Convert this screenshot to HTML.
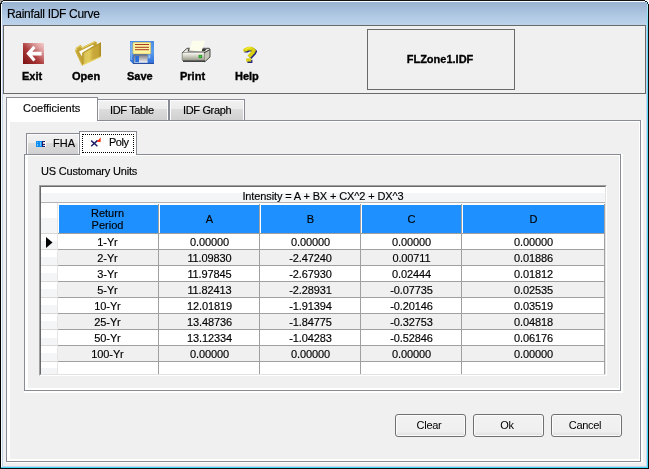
<!DOCTYPE html>
<html><head><meta charset="utf-8"><title>Rainfall IDF Curve</title>
<style>
html,body{margin:0;padding:0;}
body{width:649px;height:469px;overflow:hidden;background:#f0f0f0;font-family:"Liberation Sans",sans-serif;font-size:11px;color:#000;position:relative;}
.a{position:absolute;}
.t{position:absolute;white-space:nowrap;line-height:13px;}
#win{left:0;top:0;width:649px;height:469px;background:#f0f0f0;will-change:transform;}
#title{left:0;top:0;width:649px;height:26px;background:linear-gradient(#98b4d2 0,#9db7d5 20%,#b4cce6 70%,#bdd4ec 100%);}
#title .t{left:7px;top:7px;font-size:12px;line-height:14px;letter-spacing:-0.3px;}
.t{-webkit-text-stroke:0.15px #000;}
.t.tblbl{font-weight:bold;font-size:11px;-webkit-text-stroke:0.35px #000;}
.tab{box-sizing:border-box;border:1px solid #898c95;border-bottom:none;background:linear-gradient(#f2f2f2 0,#ebebeb 44%,#dddddd 44%,#d0d0d0 100%);box-shadow:inset 1px 1px 0 #fcfcfc,inset -1px 0 0 #fcfcfc;}
.btn{box-sizing:border-box;border:1px solid #707070;border-radius:3px;background:linear-gradient(#f2f2f2 0,#efefef 80%,#dcdcdc 100%);box-shadow:inset 0 0 0 1px #fcfcfc;text-align:center;line-height:21px;height:23px;width:71px;top:414px;text-indent:-3px;letter-spacing:-0.3px;}
table{border-collapse:collapse;}
.cell{position:absolute;text-align:center;line-height:15px;height:15px;}
</style></head><body>
<div class="a" id="win">
 <div class="a" id="title"><div class="t">Rainfall IDF Curve</div></div>
 <!-- window frame -->
 <div class="a" style="left:0;top:0;width:1px;height:469px;background:#000"></div>
 <div class="a" style="left:1px;top:1px;width:1px;height:467px;background:#fbfcfe"></div>
 <div class="a" style="left:2px;top:26px;width:1px;height:441px;background:#c3d5ea"></div>
 <div class="a" style="left:0;top:0;width:649px;height:1px;background:#111"></div>
 <div class="a" style="left:1px;top:1px;width:647px;height:1px;background:#fbfcfe"></div>
 <div class="a" style="left:648px;top:0;width:1px;height:469px;background:#0c0c0c"></div>
 <div class="a" style="left:647px;top:2px;width:1px;height:466px;background:linear-gradient(#b8eaf8 0,#5fdcf7 30px,#42d7f5 100%)"></div>
 <div class="a" style="left:646px;top:26px;width:1px;height:441px;background:#c9d3ee"></div>
 <div class="a" style="left:0;top:468px;width:649px;height:1px;background:#0c0c0c"></div>
 <div class="a" style="left:1px;top:467px;width:647px;height:1px;background:#42d7f5"></div>
 <div class="a" style="left:2px;top:466px;width:645px;height:1px;background:#c9d3ee"></div>
 <!-- rounded corners -->
 <div class="a" style="left:0;top:0;width:3px;height:1px;background:#a4a4a4"></div>
 <div class="a" style="left:0;top:1px;width:1px;height:2px;background:#a4a4a4"></div>
 <div class="a" style="left:1px;top:1px;width:2px;height:1px;background:#333"></div>
 <div class="a" style="left:1px;top:2px;width:1px;height:2px;background:#333"></div>
 <div class="a" style="left:2px;top:2px;width:1px;height:1px;background:#e8eef6"></div>
 <div class="a" style="left:645px;top:0;width:4px;height:1px;background:#fff"></div>
 <div class="a" style="left:648px;top:1px;width:1px;height:3px;background:#fff"></div>
 <div class="a" style="left:645px;top:1px;width:2px;height:1px;background:#1a2a30"></div>
 <div class="a" style="left:647px;top:1px;width:1px;height:1px;background:#fff"></div>
 <div class="a" style="left:647px;top:2px;width:1px;height:2px;background:#10303a"></div>
 <div class="a" style="left:646px;top:2px;width:1px;height:1px;background:#c8f0fa"></div>

 <!-- toolbar panel -->
 <div class="a" style="left:3px;top:25px;width:643px;height:69px;box-sizing:border-box;border:1px solid #696969;"></div>

 <!-- Exit icon -->
 <svg class="a" style="left:23px;top:43px" width="21" height="21" viewBox="0 0 21 21">
  <defs><linearGradient id="gex" x1="1" y1="0" x2="0" y2="1"><stop offset="0" stop-color="#f6d0d0"/><stop offset="0.25" stop-color="#dc9a9a"/><stop offset="0.55" stop-color="#ad3c3c"/><stop offset="1" stop-color="#7a1010"/></linearGradient></defs>
  <rect width="21" height="21" fill="url(#gex)"/>
  <path d="M3.3 10.6 L10.3 2.8 L12.6 5 L9.3 8.8 H18.6 V12.6 H9.3 L12.6 16.4 L10.3 18.4 Z" fill="#fff"/>
 </svg>
 <div class="t tblbl" style="left:22px;top:70px">Exit</div>

 <!-- Open icon -->
 <svg class="a" style="left:74px;top:40px" width="29" height="27" viewBox="0 0 29 27">
  <defs><linearGradient id="gop" x1="0" y1="0" x2="1" y2="0"><stop offset="0" stop-color="#b08c24"/><stop offset="0.12" stop-color="#dcc458"/><stop offset="0.35" stop-color="#e2cc5c"/><stop offset="0.6" stop-color="#c8a838"/><stop offset="0.85" stop-color="#c4a434"/><stop offset="1" stop-color="#a8861e"/></linearGradient></defs>
  <path d="M1.6 11.2 L2.4 7.8 L6.6 5.2 L8.4 7.6 L20.6 1.6 L22.6 2.4 L22.6 5 L9 13 L9 25 L8 25 Z" fill="#c4a434" stroke="#d2b848" stroke-width="0.9" stroke-linejoin="round"/>
  <path d="M2 10.6 L2.8 8 L6.4 5.8 L8 8.2 L20.6 2" fill="none" stroke="#e6d46a" stroke-width="1"/>
  <path d="M5 11.4 L18.8 4.8 L20 5.6 L8.6 12.6 L8 16.6 Z" fill="#fcfcf6"/>
  <path d="M8.5 13.2 L27 2.4 L27 17 L8.5 25.4 Z" fill="url(#gop)"/>
  <path d="M8.5 25 L27 16.6" stroke="#ecdc74" stroke-width="1" fill="none"/>
  <path d="M8.5 13.4 L27 2.6" stroke="#a88820" stroke-width="0.8" fill="none"/>
 </svg>
 <div class="t tblbl" style="left:72px;top:70px">Open</div>

 <!-- Save icon -->
 <svg class="a" style="left:130px;top:41px" width="24" height="23" viewBox="0 0 24 23">
  <defs><linearGradient id="gsv" x1="0" y1="0" x2="0" y2="1"><stop offset="0" stop-color="#4a8ce4"/><stop offset="0.5" stop-color="#5a9cec"/><stop offset="1" stop-color="#2a6cd8"/></linearGradient>
  <linearGradient id="gsh" x1="0" y1="0" x2="0" y2="1"><stop offset="0" stop-color="#7c7c80"/><stop offset="1" stop-color="#f4f4f6"/></linearGradient></defs>
  <path d="M0 0 H24 V23 H3.2 L0 19.8 Z" fill="url(#gsv)"/>
  <rect x="0.5" y="1" width="1.4" height="18" fill="#8ab8f4" opacity="0.8"/>
  <path d="M3 22.5 H24" stroke="#2c4c9c" stroke-width="1"/>
  <rect x="3" y="1.5" width="17.6" height="11.4" rx="0.8" fill="#fdf5a2" stroke="#e0cc68" stroke-width="0.8"/>
  <rect x="5" y="3" width="14" height="1" fill="#a83a20"/>
  <rect x="5" y="5.8" width="14" height="1" fill="#a83a20"/>
  <rect x="5" y="8.2" width="14" height="1" fill="#a83a20"/>
  <rect x="4" y="13.8" width="13.6" height="7.9" fill="url(#gsh)"/>
  <path d="M4 21.7 V13.8 H17.6" stroke="#4c5c84" stroke-width="0.8" fill="none"/>
  <rect x="5.2" y="14.8" width="3.8" height="6.4" fill="#2a70dc"/>
  <rect x="18.4" y="14.3" width="1.8" height="3" fill="#9cc4f8"/>
 </svg>
 <div class="t tblbl" style="left:127px;top:70px">Save</div>

 <!-- Print icon -->
 <svg class="a" style="left:181px;top:40px" width="30" height="24" viewBox="0 0 30 24">
  <defs><linearGradient id="gpr" x1="0" y1="0" x2="0" y2="1"><stop offset="0" stop-color="#f6f6f0"/><stop offset="0.3" stop-color="#d8d8cc"/><stop offset="0.75" stop-color="#acac9e"/><stop offset="1" stop-color="#8c8c80"/></linearGradient>
  <linearGradient id="gpt" x1="0" y1="0" x2="0" y2="1"><stop offset="0" stop-color="#d0d0c6"/><stop offset="1" stop-color="#fcfcf8"/></linearGradient></defs>
  <path d="M1.2 13 L5.9 8.3 H28.3 L29 9.8 L22.9 13 Z" fill="url(#gpt)" stroke="#3c3c3c" stroke-width="0.9" stroke-linejoin="round"/>
  <path d="M22.9 13 L29 9.6 V17 L24 21.6 H22.9 Z" fill="#c4c4b8" stroke="#3c3c3c" stroke-width="0.9" stroke-linejoin="round"/>
  <path d="M1.2 13 H22.9 V21 H2.2 L1.2 20 Z" fill="url(#gpr)"/>
  <path d="M1.2 13 V20 L2.2 21" stroke="#7c7c74" stroke-width="0.8" fill="none"/>
  <path d="M2 21.2 H24" stroke="#303030" stroke-width="1.4"/>
  <path d="M6.5 11.4 L7.5 9 H25.5 L23.5 11.4 Z" fill="#3a3a3a"/>
  <path d="M11.3 0.7 H24 L20.7 11.2 L8 10.8 Z" fill="#fdfdec"/>
  <rect x="18" y="15.2" width="2.8" height="2.6" fill="#34d434" stroke="#1c7c1c" stroke-width="0.6"/>
 </svg>
 <div class="t tblbl" style="left:180px;top:70px">Print</div>

 <!-- Help icon -->
 <svg class="a" style="left:240px;top:44px" width="20" height="20" viewBox="240 44 20 20">
  <g fill="none" stroke-linecap="butt" stroke-linejoin="round">
   <path d="M246.2 52.6 L246.2 51.2 L249.4 49.6 H252.8 L255.2 51.4 L254 53.6 L250 57.8" stroke="#24247c" stroke-width="3.6"/>
   <path d="M247.4 61.4 H252.4" stroke="#24247c" stroke-width="3.2"/>
   <path d="M245 51.6 L245 50.2 L248.2 48.6 H251.6 L254 50.4 L252.8 52.6 L248.8 56.8" stroke="#d8d00c" stroke-width="3.6"/>
   <path d="M246.2 60 H251.2" stroke="#d8d00c" stroke-width="3.2"/>
   <path d="M245.4 49.6 L248.2 47.8 H251.4" stroke="#f4ee30" stroke-width="1.2"/>
  </g>
 </svg>
 <div class="t tblbl" style="left:235px;top:70px">Help</div>

 <!-- file box -->
 <div class="a" style="left:367px;top:29px;width:148px;height:61px;box-sizing:border-box;border:1px solid #696969;"></div>
 <div class="t" style="left:366px;top:53px;width:148px;text-align:center;font-weight:bold;-webkit-text-stroke:0.3px #000;">FLZone1.IDF</div>

 <!-- outer tab pane -->
 <div class="a" style="left:6px;top:120px;width:637px;height:343px;background:#fff;"></div>
 <div class="a" style="left:6px;top:120px;width:635px;height:342px;box-sizing:border-box;border:1px solid #898c95;background:#fff;"></div>
 <div class="a" style="left:10px;top:122px;width:629px;height:337px;background:#f0f0f0;"></div>
 <!-- outer tabs -->
 <div class="a tab" style="left:97px;top:99px;width:72px;height:21px;"></div>
 <div class="a tab" style="left:169px;top:99px;width:76px;height:21px;"></div>
 <div class="a" style="left:6px;top:97px;width:92px;height:24px;box-sizing:border-box;border:1px solid #898c95;border-bottom:none;background:#fff;"></div>
 <div class="t" style="left:23px;top:102px">Coefficients</div>
 <div class="t" style="left:110px;top:104px;letter-spacing:-0.35px">IDF Table</div>
 <div class="t" style="left:183px;top:104px;letter-spacing:-0.35px">IDF Graph</div>

 <!-- inner tab pane -->
 <div class="a" style="left:24px;top:154px;width:599px;height:239px;background:#fff;"></div>
 <div class="a" style="left:24px;top:154px;width:597px;height:237px;box-sizing:border-box;border:1px solid #898c95;background:#fff;"></div>
 <div class="a" style="left:28px;top:156px;width:591px;height:232px;background:#f0f0f0;"></div>
 <!-- inner tabs -->
 <div class="a tab" style="left:26px;top:133px;width:54px;height:21px;"></div>
 <div class="a" style="left:79px;top:131px;width:58px;height:24px;box-sizing:border-box;border:1px solid #898c95;border-bottom:none;background:#fff;"></div>
 <div class="a" style="left:82px;top:134px;width:52px;height:19px;box-sizing:border-box;border:1px dotted #000;"></div>
 <svg class="a" style="left:36px;top:141px" width="10" height="6" viewBox="0 0 10 6" shape-rendering="crispEdges">
  <rect x="0" y="0" width="6" height="6" fill="#0a8cf0"/>
  <rect x="1" y="1" width="1" height="1" fill="#7cc4f8"/><rect x="1" y="3" width="1" height="2" fill="#7cc4f8"/>
  <rect x="4" y="1" width="1" height="4" fill="#7cc4f8"/>
  <rect x="6" y="0" width="1" height="6" fill="#28206c"/>
  <rect x="7" y="0" width="2" height="1" fill="#28206c"/><rect x="7" y="2.5" width="1.5" height="1" fill="#28206c"/><rect x="7" y="5" width="2" height="1" fill="#28206c"/>
  <rect x="9" y="0" width="1" height="6" fill="#fbfbfb"/>
 </svg>
 <svg class="a" style="left:90px;top:137px" width="12" height="11" viewBox="90 137 12 11">
  <path d="M91.2 140.6 L97.4 146.2 M91.2 146.2 L97.6 140.4" stroke="#20206c" stroke-width="1.5" fill="none"/>
  <path d="M96.8 141.8 L100.6 137.6 V142 Z" fill="#ff2000"/>
 </svg>
 <div class="t" style="left:53px;top:137px">FHA</div>
 <div class="t" style="left:109px;top:136px;letter-spacing:-0.5px">Poly</div>

 <div class="t" style="left:41px;top:165px;letter-spacing:-0.2px">US Customary Units</div>

 <!-- grid -->
 <div class="a" id="grid" style="left:39px;top:185px;width:568px;height:191px;box-sizing:border-box;border:1px solid;border-color:#a0a0a0 #fff #fff #a0a0a0;background:#fff;">
  <div class="a" style="left:0;top:0;width:564px;height:187px;border:1px solid;border-color:#696969 #e3e3e3 #e3e3e3 #696969;"></div>
 </div>

<!-- GRIDSTART -->
<div class="a" style="left:41px;top:187px;width:564px;height:15px;background:linear-gradient(#fff 0,#fff 40%,#f4f5f7 40%,#f4f5f7 100%);"></div>
<div class="a" style="left:41px;top:202px;width:564px;height:1px;background:#b4b4b4;"></div>
<div class="t" style="left:41px;top:190px;width:564px;text-align:center;letter-spacing:-0.12px;">Intensity = A + BX + CX^2 + DX^3</div>
<div class="a" style="left:59px;top:205px;width:99px;height:28px;background:#1e90ff;"></div>
<div class="t" style="left:58px;top:207px;width:99px;text-align:center;line-height:12px;">Return<br>Period</div>
<div class="a" style="left:160px;top:205px;width:99px;height:28px;background:#1e90ff;"></div>
<div class="t" style="left:160px;top:213px;width:99px;text-align:center;">A</div>
<div class="a" style="left:261px;top:205px;width:99px;height:28px;background:#1e90ff;"></div>
<div class="t" style="left:261px;top:213px;width:99px;text-align:center;">B</div>
<div class="a" style="left:362px;top:205px;width:99px;height:28px;background:#1e90ff;"></div>
<div class="t" style="left:362px;top:213px;width:99px;text-align:center;">C</div>
<div class="a" style="left:463px;top:205px;width:141px;height:28px;background:#1e90ff;"></div>
<div class="t" style="left:463px;top:213px;width:141px;text-align:center;">D</div>
<div class="a" style="left:58px;top:233px;width:547px;height:1px;background:#a0a0a0;"></div>
<div class="a" style="left:41px;top:203px;width:16px;height:30px;background:linear-gradient(#fff 0,#fff 50%,#f4f5f7 50%,#f4f5f7 100%);"></div>
<div class="a" style="left:41px;top:233px;width:17px;height:1px;background:#d8d8d8;"></div>
<div class="a" style="left:58px;top:234px;width:546px;height:15px;background:#fff;"></div>
<div class="a" style="left:41px;top:234px;width:16px;height:15px;background:linear-gradient(#fff 0,#fff 50%,#f4f5f7 50%,#f4f5f7 100%);"></div>
<div class="a" style="left:41px;top:249px;width:17px;height:1px;background:#d8d8d8;"></div>
<div class="a" style="left:58px;top:249px;width:547px;height:1px;background:#a0a0a0;"></div>
<div class="t" style="left:58px;top:236px;width:99px;text-align:center;letter-spacing:-0.12px;">1-Yr</div>
<div class="t" style="left:160px;top:236px;width:99px;text-align:center;letter-spacing:-0.12px;">0.00000</div>
<div class="t" style="left:261px;top:236px;width:99px;text-align:center;letter-spacing:-0.12px;">0.00000</div>
<div class="t" style="left:362px;top:236px;width:99px;text-align:center;letter-spacing:-0.12px;">0.00000</div>
<div class="t" style="left:463px;top:236px;width:141px;text-align:center;letter-spacing:-0.12px;">0.00000</div>
<div class="a" style="left:58px;top:250px;width:546px;height:15px;background:#f0f0f0;"></div>
<div class="a" style="left:41px;top:250px;width:16px;height:15px;background:linear-gradient(#fff 0,#fff 50%,#f4f5f7 50%,#f4f5f7 100%);"></div>
<div class="a" style="left:41px;top:265px;width:17px;height:1px;background:#d8d8d8;"></div>
<div class="a" style="left:58px;top:265px;width:547px;height:1px;background:#a0a0a0;"></div>
<div class="t" style="left:58px;top:252px;width:99px;text-align:center;letter-spacing:-0.12px;">2-Yr</div>
<div class="t" style="left:160px;top:252px;width:99px;text-align:center;letter-spacing:-0.12px;">11.09830</div>
<div class="t" style="left:261px;top:252px;width:99px;text-align:center;letter-spacing:-0.12px;">-2.47240</div>
<div class="t" style="left:362px;top:252px;width:99px;text-align:center;letter-spacing:-0.12px;">0.00711</div>
<div class="t" style="left:463px;top:252px;width:141px;text-align:center;letter-spacing:-0.12px;">0.01886</div>
<div class="a" style="left:58px;top:266px;width:546px;height:15px;background:#fff;"></div>
<div class="a" style="left:41px;top:266px;width:16px;height:15px;background:linear-gradient(#fff 0,#fff 50%,#f4f5f7 50%,#f4f5f7 100%);"></div>
<div class="a" style="left:41px;top:281px;width:17px;height:1px;background:#d8d8d8;"></div>
<div class="a" style="left:58px;top:281px;width:547px;height:1px;background:#a0a0a0;"></div>
<div class="t" style="left:58px;top:268px;width:99px;text-align:center;letter-spacing:-0.12px;">3-Yr</div>
<div class="t" style="left:160px;top:268px;width:99px;text-align:center;letter-spacing:-0.12px;">11.97845</div>
<div class="t" style="left:261px;top:268px;width:99px;text-align:center;letter-spacing:-0.12px;">-2.67930</div>
<div class="t" style="left:362px;top:268px;width:99px;text-align:center;letter-spacing:-0.12px;">0.02444</div>
<div class="t" style="left:463px;top:268px;width:141px;text-align:center;letter-spacing:-0.12px;">0.01812</div>
<div class="a" style="left:58px;top:282px;width:546px;height:15px;background:#f0f0f0;"></div>
<div class="a" style="left:41px;top:282px;width:16px;height:15px;background:linear-gradient(#fff 0,#fff 50%,#f4f5f7 50%,#f4f5f7 100%);"></div>
<div class="a" style="left:41px;top:297px;width:17px;height:1px;background:#d8d8d8;"></div>
<div class="a" style="left:58px;top:297px;width:547px;height:1px;background:#a0a0a0;"></div>
<div class="t" style="left:58px;top:284px;width:99px;text-align:center;letter-spacing:-0.12px;">5-Yr</div>
<div class="t" style="left:160px;top:284px;width:99px;text-align:center;letter-spacing:-0.12px;">11.82413</div>
<div class="t" style="left:261px;top:284px;width:99px;text-align:center;letter-spacing:-0.12px;">-2.28931</div>
<div class="t" style="left:362px;top:284px;width:99px;text-align:center;letter-spacing:-0.12px;">-0.07735</div>
<div class="t" style="left:463px;top:284px;width:141px;text-align:center;letter-spacing:-0.12px;">0.02535</div>
<div class="a" style="left:58px;top:298px;width:546px;height:15px;background:#fff;"></div>
<div class="a" style="left:41px;top:298px;width:16px;height:15px;background:linear-gradient(#fff 0,#fff 50%,#f4f5f7 50%,#f4f5f7 100%);"></div>
<div class="a" style="left:41px;top:313px;width:17px;height:1px;background:#d8d8d8;"></div>
<div class="a" style="left:58px;top:313px;width:547px;height:1px;background:#a0a0a0;"></div>
<div class="t" style="left:58px;top:300px;width:99px;text-align:center;letter-spacing:-0.12px;">10-Yr</div>
<div class="t" style="left:160px;top:300px;width:99px;text-align:center;letter-spacing:-0.12px;">12.01819</div>
<div class="t" style="left:261px;top:300px;width:99px;text-align:center;letter-spacing:-0.12px;">-1.91394</div>
<div class="t" style="left:362px;top:300px;width:99px;text-align:center;letter-spacing:-0.12px;">-0.20146</div>
<div class="t" style="left:463px;top:300px;width:141px;text-align:center;letter-spacing:-0.12px;">0.03519</div>
<div class="a" style="left:58px;top:314px;width:546px;height:15px;background:#f0f0f0;"></div>
<div class="a" style="left:41px;top:314px;width:16px;height:15px;background:linear-gradient(#fff 0,#fff 50%,#f4f5f7 50%,#f4f5f7 100%);"></div>
<div class="a" style="left:41px;top:329px;width:17px;height:1px;background:#d8d8d8;"></div>
<div class="a" style="left:58px;top:329px;width:547px;height:1px;background:#a0a0a0;"></div>
<div class="t" style="left:58px;top:316px;width:99px;text-align:center;letter-spacing:-0.12px;">25-Yr</div>
<div class="t" style="left:160px;top:316px;width:99px;text-align:center;letter-spacing:-0.12px;">13.48736</div>
<div class="t" style="left:261px;top:316px;width:99px;text-align:center;letter-spacing:-0.12px;">-1.84775</div>
<div class="t" style="left:362px;top:316px;width:99px;text-align:center;letter-spacing:-0.12px;">-0.32753</div>
<div class="t" style="left:463px;top:316px;width:141px;text-align:center;letter-spacing:-0.12px;">0.04818</div>
<div class="a" style="left:58px;top:330px;width:546px;height:15px;background:#fff;"></div>
<div class="a" style="left:41px;top:330px;width:16px;height:15px;background:linear-gradient(#fff 0,#fff 50%,#f4f5f7 50%,#f4f5f7 100%);"></div>
<div class="a" style="left:41px;top:345px;width:17px;height:1px;background:#d8d8d8;"></div>
<div class="a" style="left:58px;top:345px;width:547px;height:1px;background:#a0a0a0;"></div>
<div class="t" style="left:58px;top:332px;width:99px;text-align:center;letter-spacing:-0.12px;">50-Yr</div>
<div class="t" style="left:160px;top:332px;width:99px;text-align:center;letter-spacing:-0.12px;">13.12334</div>
<div class="t" style="left:261px;top:332px;width:99px;text-align:center;letter-spacing:-0.12px;">-1.04283</div>
<div class="t" style="left:362px;top:332px;width:99px;text-align:center;letter-spacing:-0.12px;">-0.52846</div>
<div class="t" style="left:463px;top:332px;width:141px;text-align:center;letter-spacing:-0.12px;">0.06176</div>
<div class="a" style="left:58px;top:346px;width:546px;height:15px;background:#f0f0f0;"></div>
<div class="a" style="left:41px;top:346px;width:16px;height:15px;background:linear-gradient(#fff 0,#fff 50%,#f4f5f7 50%,#f4f5f7 100%);"></div>
<div class="a" style="left:41px;top:361px;width:17px;height:1px;background:#d8d8d8;"></div>
<div class="a" style="left:58px;top:361px;width:547px;height:1px;background:#a0a0a0;"></div>
<div class="t" style="left:58px;top:348px;width:99px;text-align:center;letter-spacing:-0.12px;">100-Yr</div>
<div class="t" style="left:160px;top:348px;width:99px;text-align:center;letter-spacing:-0.12px;">0.00000</div>
<div class="t" style="left:261px;top:348px;width:99px;text-align:center;letter-spacing:-0.12px;">0.00000</div>
<div class="t" style="left:362px;top:348px;width:99px;text-align:center;letter-spacing:-0.12px;">0.00000</div>
<div class="t" style="left:463px;top:348px;width:141px;text-align:center;letter-spacing:-0.12px;">0.00000</div>
<div class="a" style="left:58px;top:362px;width:546px;height:12px;background:#fff;"></div>
<div class="a" style="left:41px;top:362px;width:16px;height:12px;background:linear-gradient(#fff 0,#fff 50%,#f4f5f7 50%,#f4f5f7 100%);"></div>
<div class="a" style="left:158px;top:204px;width:1px;height:170px;background:#a0a0a0;"></div>
<div class="a" style="left:259px;top:204px;width:1px;height:170px;background:#a0a0a0;"></div>
<div class="a" style="left:360px;top:204px;width:1px;height:170px;background:#a0a0a0;"></div>
<div class="a" style="left:461px;top:204px;width:1px;height:170px;background:#a0a0a0;"></div>
<div class="a" style="left:604px;top:204px;width:1px;height:170px;background:#a0a0a0;"></div>
<div class="a" style="left:57px;top:203px;width:1px;height:171px;background:#e6e6e6;"></div>
<svg class="a" style="left:46px;top:237px" width="7" height="11" viewBox="0 0 7 11"><path d="M0 0 L6.5 5.5 L0 11 Z" fill="#000"/></svg>
<!-- GRIDEND -->
 <div class="a btn" style="left:395px;">Clear</div>
 <div class="a btn" style="left:473px;">Ok</div>
 <div class="a btn" style="left:551px;">Cancel</div>
</div>
</body></html>
